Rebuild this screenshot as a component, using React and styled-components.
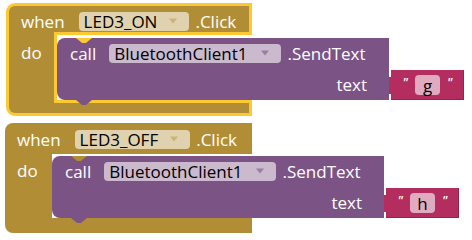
import React from 'react'
import styled, { createGlobalStyle, css } from 'styled-components'

const GOLD = '#b18e35'
const PURPLE = '#7c5385'
const PINK = '#b32d5e'
const HILITE = '#fcc933'

const GlobalStyle = createGlobalStyle`
  html, body {
    margin: 0;
    background: #fff;
  }
  body {
    font-family: "Open Sans", "Noto Sans", sans-serif;
    font-size: 17px;
  }
`

const Page = styled.div`
  display: flex;
  flex-direction: column;
  align-items: flex-start;
  gap: 7px;
  padding: 3px 0 0 5px;
`

const Event = styled.div`
  display: flex;
  flex-direction: column;
  align-items: flex-start;
  margin-left: ${p => (p.$selected ? '1px' : '0')};
  color: #fff;
`

// yellow line drawn inside a gold part, starting where the "do" arm ends
const innerLine = pos =>
  `linear-gradient(${HILITE}, ${HILITE}) 45px ${pos} / 100% 3px no-repeat, ${GOLD}`

const Header = styled.div`
  box-sizing: border-box;
  display: flex;
  align-items: center;
  width: 247px;
  height: 31px;
  padding: 1px 0 0 12px;
  background: ${GOLD};
  border-radius: 8px 0 0 0;
  white-space: nowrap;
  ${p =>
    p.$selected &&
    css`
      width: 246px;
      height: 32px;
      border: 3px solid ${HILITE};
      border-bottom: 0;
      border-radius: 9px 0 0 0;
      background: ${innerLine('100%')};
    `}
`

const Field = styled.span`
  display: inline-flex;
  align-items: center;
  gap: ${p => p.$gap || 12}px;
  height: 19px;
  padding: 0 12px 0 5px;
  margin: ${p => p.$margin || '0'};
  border-radius: 4px;
  background: ${p => p.$bg};
  color: #000;
  line-height: 1;
`

const Body = styled.div`
  display: flex;
  align-items: stretch;
`

const Arm = styled.div`
  box-sizing: border-box;
  width: 47px;
  padding: 2px 0 0 12px;
  background: ${GOLD};
  ${p =>
    p.$selected &&
    css`
      width: 51px;
      padding-top: 3px;
      border-left: 3px solid ${HILITE};
      border-right: 3px solid ${HILITE};
    `}
`

const Label = styled.div`
  height: 30px;
  line-height: 30px;
`

const Statement = styled.div`
  display: flex;
  align-items: flex-start;
  padding-top: ${p => (p.$selected ? 3 : 2)}px;
`

const Call = styled.div`
  position: relative;
  box-sizing: border-box;
  display: flex;
  flex-direction: column;
  width: 332px;
  height: 62px;
  padding: 0 22px 0 13px;
  background: ${PURPLE};
  border-radius: 8px 0 0 8px;
  white-space: nowrap;

  &::before,
  &::after {
    content: '';
    position: absolute;
    left: 19px;
    width: 16px;
    height: 5px;
    clip-path: polygon(0 0, 100% 0, 62% 100%, 38% 100%);
  }
  &::before {
    top: 0;
    background: ${p => p.$notch};
  }
  &::after {
    bottom: -5px;
    z-index: 1;
    background: ${PURPLE};
  }
`

const Row = styled.div`
  display: flex;
  align-items: center;
  justify-content: ${p => (p.$end ? 'flex-end' : 'flex-start')};
  height: ${p => p.$h}px;
  gap: ${p => p.$gap || 0}px;
`

const ValueSlot = styled.div`
  display: flex;
  align-items: flex-start;
  padding-top: 32px;
`

const Tab = styled.svg`
  flex: none;
  margin: 7px 0 0 -8px;
`

const TextBlock = styled.div`
  box-sizing: border-box;
  display: flex;
  align-items: center;
  justify-content: center;
  gap: 7px;
  width: 73px;
  height: 30px;
  background: ${PINK};
  box-shadow: inset -1px -1px 0 rgba(0, 0, 0, 0.18);
`

const Quote = styled.span`
  font-size: 13px;
  font-style: italic;
  font-weight: 600;
  line-height: 1;
  margin-top: -6px;
`

const Literal = styled.span`
  display: inline-flex;
  align-items: center;
  justify-content: center;
  min-width: 25px;
  height: 20px;
  border-radius: 4px;
  background: #e1abbf;
  color: #000;
  line-height: 1;
`

const Footer = styled.div`
  box-sizing: border-box;
  width: 247px;
  height: 15px;
  background: ${GOLD};
  border-radius: 0 0 0 8px;
  ${p =>
    p.$selected &&
    css`
      width: 246px;
      height: 16px;
      border: 3px solid ${HILITE};
      border-top: 0;
      border-radius: 0 0 0 9px;
      background: ${innerLine('0')};
    `}
`

const Arrow = ({ color }) => (
  <svg width="8" height="6" viewBox="0 0 8 6">
    <path d="M0 0.5h8L4 5.5z" fill={color} />
  </svg>
)

const ClickHandler = ({ button, letter, selected }) => (
  <Event $selected={selected}>
    <Header $selected={selected}>
      <span>when</span>
      <Field $bg="#e0d2ae" $margin="0 6px 0 14px">
        {button}
        <Arrow color="rgba(177,142,53,0.45)" />
      </Field>
      <span>.Click</span>
    </Header>
    <Body>
      <Arm $selected={selected}>
        <Label>do</Label>
      </Arm>
      <Statement $selected={selected}>
        <Call $notch={selected ? HILITE : GOLD}>
          <Row $h={30} $gap={13}>
            <span>call</span>
            <Field $bg="#cbbace" $gap={14} $margin="0 -7px 0 0">
              BluetoothClient1
              <Arrow color="rgba(124,83,133,0.6)" />
            </Field>
            <span>.SendText</span>
          </Row>
          <Row $h={32} $end>
            <span>text</span>
          </Row>
        </Call>
        <ValueSlot>
          <Tab width="10" height="17" viewBox="0 0 10 17">
            <path
              d="M10 0H2.5Q0 0 0 2.5V4Q3 6 3 8.5Q3 11 0 13V14.5Q0 17 2.5 17H10Z"
              fill={PINK}
            />
          </Tab>
          <TextBlock>
            <Quote>"</Quote>
            <Literal>{letter}</Literal>
            <Quote>"</Quote>
          </TextBlock>
        </ValueSlot>
      </Statement>
    </Body>
    <Footer $selected={selected} />
  </Event>
)

export default function App() {
  return (
    <>
      <GlobalStyle />
      <Page>
        <ClickHandler button="LED3_ON" letter="g" selected />
        <ClickHandler button="LED3_OFF" letter="h" />
      </Page>
    </>
  )
}
